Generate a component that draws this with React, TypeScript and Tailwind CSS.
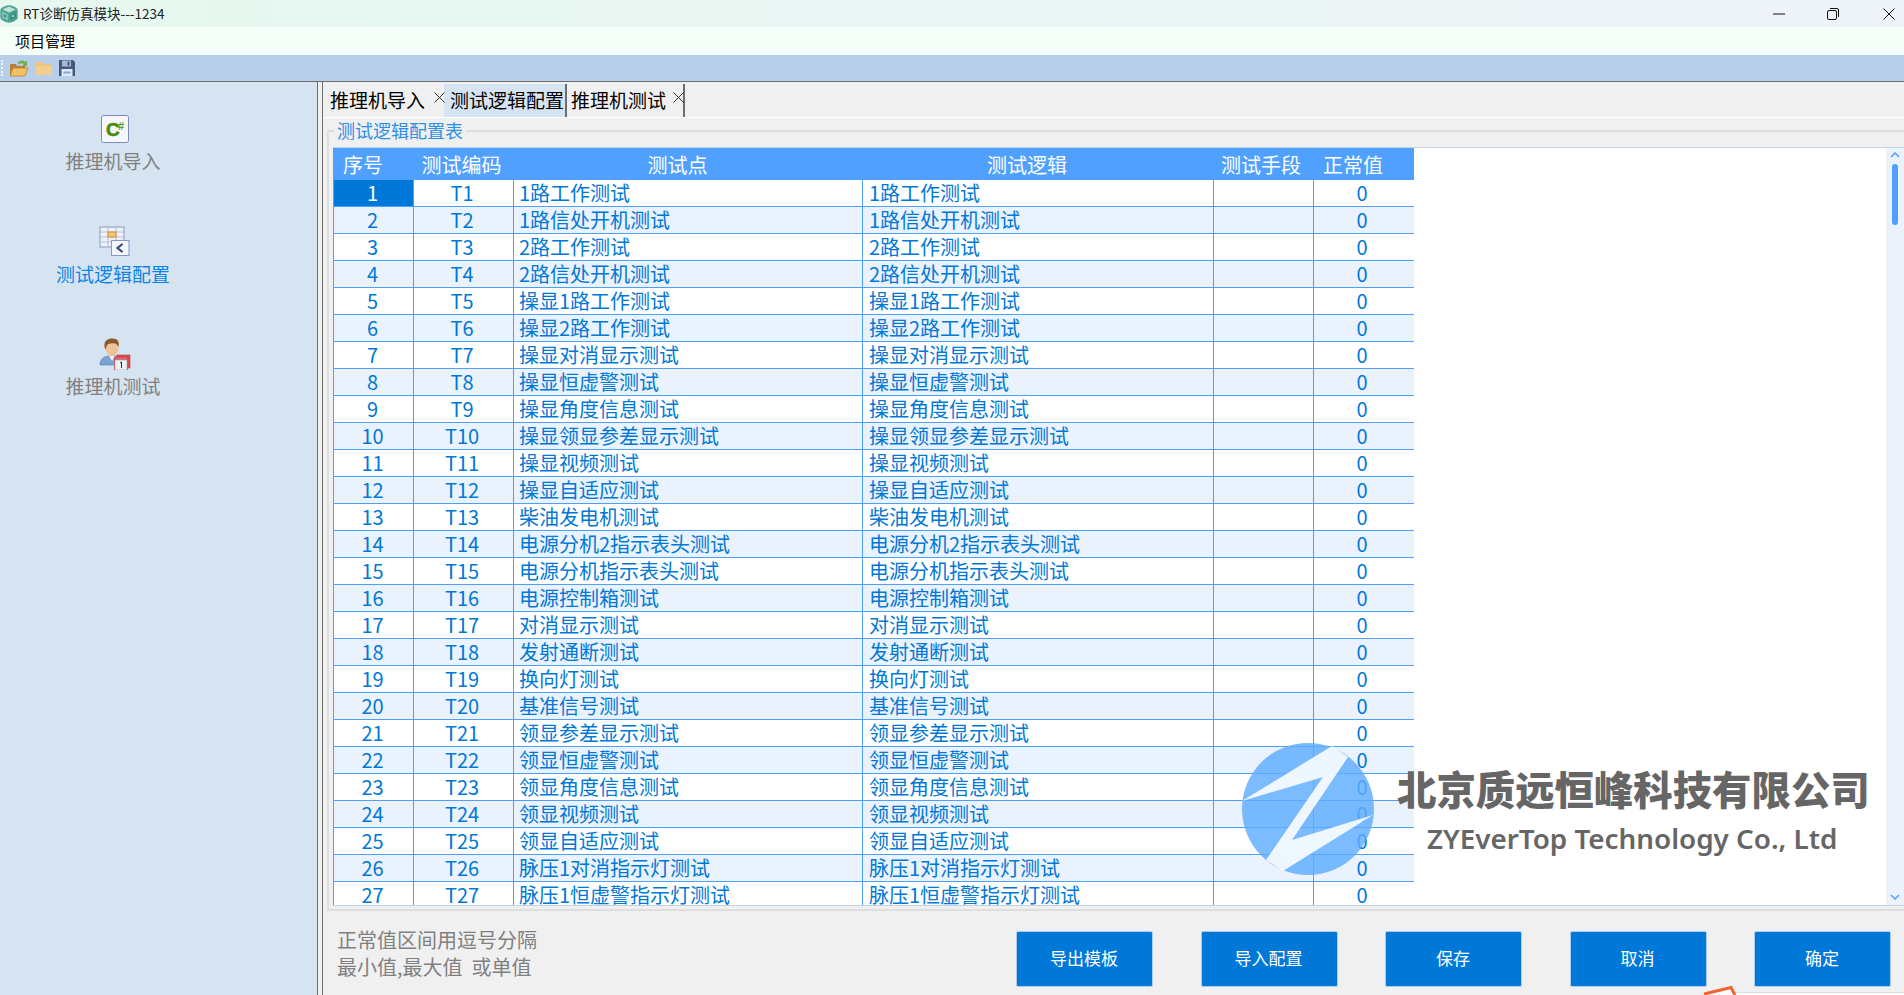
import React from "react";

const names: [string, string][] = [
  ["T1", "1路工作测试"], ["T2", "1路信处开机测试"], ["T3", "2路工作测试"], ["T4", "2路信处开机测试"],
  ["T5", "操显1路工作测试"], ["T6", "操显2路工作测试"], ["T7", "操显对消显示测试"], ["T8", "操显恒虚警测试"],
  ["T9", "操显角度信息测试"], ["T10", "操显领显参差显示测试"], ["T11", "操显视频测试"], ["T12", "操显自适应测试"],
  ["T13", "柴油发电机测试"], ["T14", "电源分机2指示表头测试"], ["T15", "电源分机指示表头测试"], ["T16", "电源控制箱测试"],
  ["T17", "对消显示测试"], ["T18", "发射通断测试"], ["T19", "换向灯测试"], ["T20", "基准信号测试"],
  ["T21", "领显参差显示测试"], ["T22", "领显恒虚警测试"], ["T23", "领显角度信息测试"], ["T24", "领显视频测试"],
  ["T25", "领显自适应测试"], ["T26", "脉压1对消指示灯测试"], ["T27", "脉压1恒虚警指示灯测试"],
];

const font = "font-['Noto_Sans_CJK_SC','Noto_Sans',sans-serif]";

function AppIcon() {
  return (
    <svg width="18" height="18" viewBox="0 0 18 18" className="shrink-0">
      <path d="M9 0.3 C12 0.3 17.7 3 17.7 5 L17.7 13 C17.7 15 12 17.7 9 17.7 C6 17.7 0.3 15 0.3 13 L0.3 5 C0.3 3 6 0.3 9 0.3 Z" fill="#4fa396" />
      <path d="M9 1.5 L15.5 4.6 L9 7.6 L2.5 4.6 Z" fill="#bfe4d8" />
      <path d="M2 6.5 L8 9.2 L8 15.5 L2 12.8 Z" fill="#7cc4b4" />
      <path d="M16 6.5 L10 9.2 L10 15.5 L16 12.8 Z" fill="#3c9082" />
      <circle cx="5" cy="11" r="1.3" fill="#3c9082" />
      <circle cx="13" cy="11" r="1.3" fill="#8fd0c0" />
    </svg>
  );
}

function OpenFolder() {
  return (
    <svg width="20" height="18" viewBox="0 0 20 18">
      <path d="M9 4 C11 1 14 1 16 3 L18 1.5 L18 7 L13 7 L15 5 C13 3.8 11 4 9 6 Z" fill="#6fae4a" />
      <path d="M1 5 L7 5 L8 7 L16 7 L16 16 L1 16 Z" fill="#b5813a" />
      <path d="M1 17 L4 9 L19 9 L16 17 Z" fill="#f2c264" stroke="#b98232" strokeWidth="0.8" />
    </svg>
  );
}

function Folder() {
  return (
    <svg width="18" height="16" viewBox="0 0 18 16">
      <path d="M1 2 L7 2 L8.5 4 L16 4 L16 15 L1 15 Z" fill="#eec37c" />
      <path d="M1 6 L16.5 6 L16.5 15 L1 15 Z" fill="#f3cf8f" />
    </svg>
  );
}

function Save() {
  return (
    <svg width="18" height="18" viewBox="0 0 18 18">
      <path d="M1 1 L15 1 L17 3 L17 17 L1 17 Z" fill="#44587f" />
      <rect x="4" y="1.5" width="9" height="6" fill="#aab8d2" />
      <rect x="9.5" y="2.5" width="2" height="4" fill="#44587f" />
      <rect x="3.5" y="10" width="11" height="7" fill="#dfe9f6" />
      <rect x="5.5" y="12.5" width="7" height="2" fill="#86a7d2" />
    </svg>
  );
}

function CSharpIcon() {
  return (
    <svg width="30" height="30" viewBox="0 0 30 30">
      <rect x="1.5" y="1.5" width="27" height="27" rx="2" fill="#f6f7fc" stroke="#7c8abb" strokeWidth="1" />
      <text x="6" y="22" fontSize="19" fontWeight="700" fill="#4a8a0c" stroke="#4a8a0c" strokeWidth="0.6" fontFamily="'Liberation Sans',sans-serif">C</text>
      <text x="18" y="16" fontSize="11" fontWeight="700" fill="#5c9a18" fontFamily="'Liberation Sans',sans-serif">#</text>
    </svg>
  );
}

function TableIcon() {
  return (
    <svg width="32" height="32" viewBox="0 0 32 32">
      <rect x="1" y="1" width="24" height="20" fill="#eef1f8" stroke="#8c98c4" />
      <path d="M1 6 H25 M1 11 H25 M1 16 H25 M9 1 V21 M17 1 V21" stroke="#aab4d2" strokeWidth="0.8" />
      <rect x="9" y="6" width="8" height="5" fill="#f3c76f" stroke="#cf7f2c" strokeWidth="0.8" />
      <rect x="12.5" y="14.5" width="17.5" height="15" fill="#f4f6fb" stroke="#8c98c4" />
      <path d="M23.5 18 L18.5 22 L23.5 26" fill="none" stroke="#3c4a68" strokeWidth="2.2" />
    </svg>
  );
}

function PersonIcon() {
  return (
    <svg width="32" height="32" viewBox="0 0 32 32">
      <path d="M1 27 C1 20 6 18 11 18 L20 18 L20 27 Z" fill="#7aa4d6" stroke="#4b78b0" strokeWidth="0.6" />
      <path d="M10 18 L13 23 L16 18 Z" fill="#eef3fa" />
      <ellipse cx="13" cy="10" rx="6.5" ry="8" fill="#eec39a" />
      <path d="M5.5 9 C4.5 2 10 0 14 0.5 C19 0.5 20.5 4 19.5 9 C18 5 15 5 12 5.5 C9 5.5 7 7 7 12 Z" fill="#8a5a2c" />
      <rect x="18" y="17" width="13" height="13" fill="#e0474f" stroke="#b93a42" strokeWidth="0.6" />
      <rect x="15.5" y="19" width="13" height="13" fill="#e0636a" stroke="#c04048" strokeWidth="0.6" />
      <rect x="16" y="22" width="12" height="10" fill="#eef0f4" stroke="#9aa0ac" strokeWidth="0.6" />
      <path d="M21 25 L22.5 24 L22.5 30" fill="none" stroke="#333" strokeWidth="1" />
    </svg>
  );
}

function SideItem({ icon, label, active }: { icon: React.ReactNode; label: string; active?: boolean }) {
  return (
    <div className="flex h-[112px] flex-col items-center">
      <div className="ml-[4px] flex h-[32px] items-center justify-center">{icon}</div>
      <div className={`mt-[2px] text-[19px] leading-[28px] ${active ? "text-[#0a84e8]" : "text-[#808080]"}`}>{label}</div>
    </div>
  );
}

function Tab({ label, w, pl, gap, active, close, border }: { label: string; w: string; pl: string; gap?: string; active?: boolean; close?: boolean; border?: boolean }) {
  return (
    <div
      className={`flex h-[33px] shrink-0 items-center pb-[2px] text-[19px] leading-none text-black ${w} ${pl} ${active ? "bg-[#d6e4f2]" : "bg-[#f0f0f0]"} ${border ? "border-r-2 border-[#6d6d6d]" : ""}`}
    >
      <span className="shrink-0 whitespace-nowrap">{label}</span>
      {close && (
        <svg width="11" height="11" viewBox="0 0 11 11" className={`shrink-0 -translate-y-[2px] ${gap}`}>
          <path d="M0.5 0.5 L10.5 10.5 M10.5 0.5 L0.5 10.5" stroke="#333" strokeWidth="1" />
        </svg>
      )}
    </div>
  );
}

const cols = "grid grid-cols-[80px_100px_349px_351px_100px_101px]";

function Row({ i, code, name }: { i: number; code: string; name: string }) {
  const cell = "border-r border-b border-[#4ea0ff] whitespace-nowrap";
  return (
    <div className={`${cols} h-[27px] text-[20px] leading-[26px] text-[#0078d7] ${i % 2 === 0 ? "bg-[#eaf2fd]" : "bg-white"}`}>
      <div className={`${cell} pr-[2px] text-center ${i === 1 ? "bg-[#0078d7] text-white" : ""}`}>{i}</div>
      <div className={`${cell} pr-[3px] text-center`}>{code}</div>
      <div className={`${cell} pl-[5px]`}>{name}</div>
      <div className={`${cell} pl-[6px]`}>{name}</div>
      <div className={cell}></div>
      <div className={`${cell} pr-[4px] text-center`}>0</div>
    </div>
  );
}

function Btn({ label }: { label: string }) {
  return (
    <button className="flex h-[56px] w-[137px] shrink-0 items-center justify-center rounded-[2px] border border-[#a9cdf0] bg-[#0078d7] pb-[2px] pr-[1px] text-[17px] text-white">
      {label}
    </button>
  );
}

export default function App() {
  return (
    <div className={`relative flex h-[995px] w-[1904px] flex-col overflow-hidden bg-[#f0f0f0] ${font}`}>
      {/* title bar */}
      <div className="flex h-[27px] shrink-0 items-center bg-gradient-to-r from-[#e6f8ef] to-[#eef3f9]">
        <AppIcon />
        <span className="ml-[5px] text-[13.5px] text-[#222]">RT诊断仿真模块---1234</span>
        <div className="ml-auto flex items-center">
          <svg width="12" height="2" viewBox="0 0 12 2" className="mr-[42px]"><path d="M0 1 H12" stroke="#111" /></svg>
          <svg width="12" height="12" viewBox="0 0 12 12" className="mr-[44px]">
            <rect x="0.5" y="2.5" width="9" height="9" rx="1.5" fill="none" stroke="#111" />
            <path d="M3 0.5 H10 Q11.5 0.5 11.5 2 V9" fill="none" stroke="#111" />
          </svg>
          <svg width="12" height="12" viewBox="0 0 12 12" className="mr-[9px]"><path d="M0.5 0.5 L11.5 11.5 M11.5 0.5 L0.5 11.5" stroke="#111" /></svg>
        </div>
      </div>
      {/* menu */}
      <div className="flex h-[28px] shrink-0 items-center bg-[#f5fff9] pl-[15px] text-[15px] text-black">项目管理</div>
      {/* toolbar */}
      <div className="flex h-[26px] shrink-0 items-center bg-[#b9cfe9] pl-[1px]">
        <div className="mr-[5px] h-[16px] w-[3px] border-l-2 border-dotted border-[#eef3fa]"></div>
        <OpenFolder />
        <div className="ml-[6px]"><Folder /></div>
        <div className="ml-[5px]"><Save /></div>
      </div>
      <div className="h-[1px] shrink-0 bg-[#6d6d6d]"></div>
      {/* body */}
      <div className="flex min-h-0 flex-1">
        <aside className="flex w-[318px] shrink-0 flex-col border-r border-[#6d6d6d] bg-[#d6e4f2] pr-[91px] pt-[31px]">
          <SideItem icon={<CSharpIcon />} label="推理机导入" />
          <div className="pt-[1px]">
            <SideItem icon={<TableIcon />} label="测试逻辑配置" active />
          </div>
          <SideItem icon={<PersonIcon />} label="推理机测试" />
        </aside>
        <main className="ml-[4px] flex min-w-0 flex-1 flex-col border-l border-[#6d6d6d] pt-[2px]">
          {/* tabs */}
          <div className="flex h-[34px] shrink-0 items-end border-b border-white pl-[3px]">
            <Tab label="推理机导入" w="w-[118px]" pl="pl-[4px]" gap="ml-[9px]" close />
            <Tab label="测试逻辑配置" w="w-[123px]" pl="pl-[6px]" active border />
            <Tab label="推理机测试" w="w-[118px]" pl="pl-[4px]" gap="ml-[7px]" close border />
          </div>
          {/* group box */}
          <div className="relative ml-[4px] mt-[12px] flex h-[781px] shrink-0 flex-col border-y-2 border-l-2 border-[#dedede] pl-[4px] pt-[15px]">
            <span className="absolute left-[5px] top-[-13px] bg-[#f0f0f0] px-[3px] text-[18px] leading-[22px] text-[#2c8fe6]">测试逻辑配置表</span>
            <div className="flex h-[759px] min-h-0 border-y border-[#c0d2e4] bg-white">
              <div className="h-[757px] w-[1081px] shrink-0 overflow-hidden border-l border-[#4ea0ff]">
                <div className="flex h-[32px] items-center whitespace-nowrap bg-[#4fa0ff] pt-[2px] text-[20px] leading-none text-white">
                  <div className="flex w-[58px] justify-center">序号</div>
                  <div className="flex w-[139px] justify-center">测试编码</div>
                  <div className="flex w-[293px] justify-center">测试点</div>
                  <div className="flex w-[406px] justify-center">测试逻辑</div>
                  <div className="flex w-[62px] justify-center">测试手段</div>
                  <div className="flex w-[122px] justify-center">正常值</div>
                </div>
                {names.map(([code, name], idx) => (
                  <Row key={code} i={idx + 1} code={code} name={name} />
                ))}
              </div>
              <div className="flex-1"></div>
              <div className="relative flex w-[18px] shrink-0 flex-col items-center bg-[#ebf2fb] pt-[4px]">
                <svg width="10" height="6" viewBox="0 0 10 6"><path d="M1 5 L5 1 L9 5" fill="none" stroke="#4ea0ff" strokeWidth="1.5" /></svg>
                <div className="mt-[6px] h-[61px] w-[6px] rounded-full bg-[#4ea0ff]"></div>
                <svg width="10" height="6" viewBox="0 0 10 6" className="mt-auto mb-[5px]"><path d="M1 1 L5 5 L9 1" fill="none" stroke="#4ea0ff" strokeWidth="1.5" /></svg>
              </div>
            </div>
          </div>
          {/* bottom */}
          <div className="flex min-h-0 flex-1 items-start">
            <div className="ml-[14px] mt-[15px] text-[20px] leading-[27px] text-[#808080]">
              <div>正常值区间用逗号分隔</div>
              <div>最小值,最大值&nbsp;&nbsp;或单值</div>
            </div>
            <div className="ml-auto mr-[13px] mt-[20px] flex gap-[47.5px]">
              <Btn label="导出模板" />
              <Btn label="导入配置" />
              <Btn label="保存" />
              <Btn label="取消" />
              <Btn label="确定" />
            </div>
          </div>
        </main>
      </div>

      {/* watermark logo over the table */}
      <svg width="134" height="134" viewBox="1241 742 134 134" className="absolute left-[1241px] top-[742px]">
        <circle cx="1308" cy="809" r="66" fill="#5eacff" fillOpacity="0.82" />
        <polygon points="1332,746 1348,757 1292,840 1373,815 1283,871 1266,860 1323,777 1242,801" fill="#ffffff" fillOpacity="0.88" />
      </svg>
      <div className="absolute left-[1397px] top-[760px] whitespace-nowrap text-[39.4px] font-black leading-[56px] text-[#666666]">北京质远恒峰科技有限公司</div>
      <div className="absolute left-[1427px] top-[818px] whitespace-nowrap font-['Noto_Sans',sans-serif] text-[27.8px] font-semibold leading-[40px] text-[#666666]">ZYEverTop Technology Co., Ltd</div>

      {/* window edge peeking in at the bottom */}
      <div className="absolute left-[1736px] top-[992px] h-[3px] w-[168px] border-t border-[#d8dde3] bg-white"></div>
      <svg width="34" height="10" viewBox="0 0 34 10" className="absolute left-[1703px] top-[985px]">
        <path d="M1 9 L28 2.5 L32 10" fill="#ffffff" stroke="#f4622d" strokeWidth="3" />
      </svg>
    </div>
  );
}
